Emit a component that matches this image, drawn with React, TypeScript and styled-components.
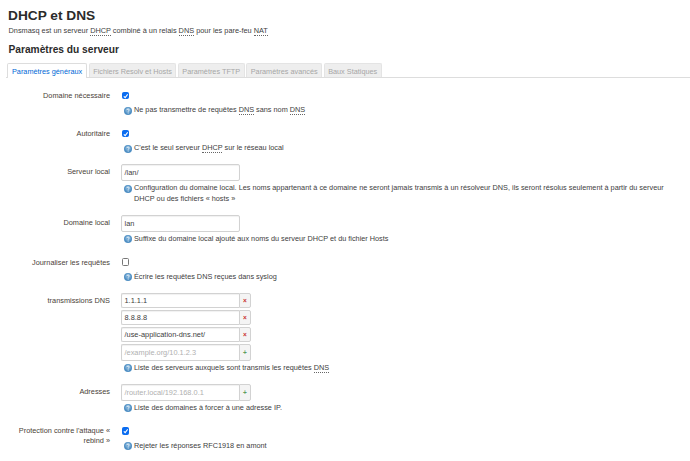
import React from 'react'
import styled, { createGlobalStyle } from 'styled-components'

const GlobalStyle = createGlobalStyle`
  html, body {
    margin: 0;
    padding: 0;
    background: #fff;
    overflow: hidden;
  }
  body {
    font-family: "Liberation Sans", Arial, sans-serif;
    color: #404040;
  }
`

const Page = styled.div`
  width: 690px;
  height: 461px;
  overflow: hidden;
  box-sizing: border-box;
  padding-top: 7px;
`

const Title = styled.h2`
  margin: 0 0 0 8px;
  font-size: 13.7px;
  line-height: 17px;
  font-weight: 700;
  color: #2b2b2b;
`

const Description = styled.p`
  margin: 1px 0 0 8.5px;
  font-size: 7.35px;
  line-height: 11px;
  color: #404040;
`

const Heading = styled.h3`
  margin: 7px 0 0 8.5px;
  font-size: 10.2px;
  line-height: 14px;
  font-weight: 700;
  color: #2b2b2b;
`

const Abbr = styled.abbr`
  text-decoration: none;
  border-bottom: 1px dotted #666;
`

const Tabs = styled.ul`
  list-style: none;
  display: flex;
  gap: 1.5px;
  margin: 6px 0 0 6px;
  padding: 0 0 0 1px;
  height: 14px;
  border-bottom: 1px solid #ddd;
`

const Tab = styled.li<{ $active?: boolean }>`
  box-sizing: border-box;
  padding: 0 ${(p) => (p.$active ? '4px' : '3.5px')};
  font-size: 7.3px;
  line-height: 15px;
  white-space: nowrap;
  border: 1px solid ${(p) => (p.$active ? '#ddd' : '#e4e4e4')};
  border-bottom: 0;
  border-radius: 2px 2px 0 0;
  background: ${(p) => (p.$active ? '#fff' : '#eee')};
  color: ${(p) => (p.$active ? '#0069d6' : '#a6a6a6')};
  height: ${(p) => (p.$active ? '15px' : '14px')};
`

const Form = styled.div`
  margin-top: 10px;
  display: flex;
  flex-direction: column;
  gap: 10.5px;
`

const Row = styled.div`
  display: grid;
  grid-template-columns: 110px 1fr;
  column-gap: 11px;
`

const Label = styled.label<{ $tall?: boolean }>`
  justify-self: end;
  text-align: right;
  width: 100px;
  font-size: 7.35px;
  line-height: ${(p) => (p.$tall ? '10.5px' : '15px')};
  padding-top: ${(p) => (p.$tall ? '2px' : '0')};
  color: #4a4238;
`

const Field = styled.div`
  min-width: 0;
`

const CheckLine = styled.div`
  height: 15px;
  display: flex;
  align-items: center;
`

const CheckBox = styled.span<{ $checked?: boolean }>`
  box-sizing: border-box;
  margin-left: 0.5px;
  width: 7.5px;
  height: 7.5px;
  border-radius: 1.5px;
  display: flex;
  align-items: center;
  justify-content: center;
  background: ${(p) => (p.$checked ? '#0a6cf0' : '#fff')};
  border: 1px solid ${(p) => (p.$checked ? '#0a6cf0' : '#777')};
  svg {
    display: block;
  }
`

const TextInput = styled.div`
  box-sizing: border-box;
  width: 119px;
  height: 17px;
  padding: 0 2.5px;
  font-size: 7.4px;
  line-height: 15px;
  white-space: nowrap;
  background: #fff;
  border: 1px solid #d2d2d2;
  border-radius: 2px;
  box-shadow: inset 0 1px 1px rgba(0, 0, 0, 0.06);
  color: #404040;
`

const DynList = styled.div`
  display: flex;
  flex-direction: column;
`

const DynRow = styled.div<{ $short?: boolean }>`
  display: flex;
  width: 130px;
  height: ${(p) => (p.$short ? '15px' : '17px')};
  margin-bottom: ${(p) => (p.$short ? '2px' : '0')};
`

const DynInput = styled.div<{ $placeholder?: boolean }>`
  box-sizing: border-box;
  flex: 1;
  padding: 0 2.5px;
  font-size: 7.4px;
  white-space: nowrap;
  background: #fff;
  border: 1px solid #d2d2d2;
  border-right: 0;
  border-radius: 2px 0 0 2px;
  box-shadow: inset 0 1px 1px rgba(0, 0, 0, 0.06);
  display: flex;
  align-items: center;
  color: ${(p) => (p.$placeholder ? '#b0b0b0' : '#404040')};
`

const DynButton = styled.div<{ $add?: boolean }>`
  box-sizing: border-box;
  width: 12px;
  display: flex;
  align-items: center;
  justify-content: center;
  font-size: 6.5px;
  font-weight: 700;
  background: #f4f4f4;
  border: 1px solid #d2d2d2;
  border-radius: 0 2px 2px 0;
  color: ${(p) => (p.$add ? '#5f9e5f' : '#c9302c')};
`

const Hint = styled.div`
  position: relative;
  margin-top: 2px;
  padding-left: 13px;
  font-size: 7.3px;
  line-height: 10.5px;
  color: #404040;
`

const HintIcon = styled.svg`
  position: absolute;
  left: 2.5px;
  top: 1.5px;
  width: 8px;
  height: 8px;
`

const HelpIcon = () => (
  <HintIcon viewBox="0 0 16 16">
    <circle cx="8" cy="8" r="8" fill="#4f8fc4" />
    <circle cx="8" cy="6.5" r="5.5" fill="#8fbde0" opacity="0.55" />
    <path d="M5.6 6.2c0-1.5 1.1-2.3 2.5-2.3s2.4.8 2.4 2c0 1.8-2.2 1.7-2.2 3.4" fill="none" stroke="#fff" strokeWidth="1.7" />
    <circle cx="8.3" cy="12" r="1.1" fill="#fff" />
  </HintIcon>
)

const Check = ({ checked }: { checked?: boolean }) => (
  <CheckLine>
    <CheckBox $checked={checked}>
      {checked && (
        <svg width="6" height="6" viewBox="0 0 10 10">
          <path d="M1.5 5.5 4 8l4.5-6" fill="none" stroke="#fff" strokeWidth="2" />
        </svg>
      )}
    </CheckBox>
  </CheckLine>
)

const Help = ({ children }: { children: React.ReactNode }) => (
  <Hint>
    <HelpIcon />
    {children}
  </Hint>
)

const tabs = [
  'Paramètres généraux',
  'Fichiers Resolv et Hosts',
  'Paramètres TFTP',
  'Paramètres avancés',
  'Baux Statiques',
]

const servers = ['1.1.1.1', '8.8.8.8', '/use-application-dns.net/']

export default function App() {
  return (
    <Page>
      <GlobalStyle />
      <Title>DHCP et DNS</Title>
      <Description>
        Dnsmasq est un serveur <Abbr>DHCP</Abbr> combiné à un relais <Abbr>DNS</Abbr> pour les pare-feu <Abbr>NAT</Abbr>
      </Description>
      <Heading>Paramètres du serveur</Heading>
      <Tabs>
        {tabs.map((t, i) => (
          <Tab key={t} $active={i === 0}>
            {t}
          </Tab>
        ))}
      </Tabs>
      <Form>
        <Row>
          <Label>Domaine nécessaire</Label>
          <Field>
            <Check checked />
            <Help>
              Ne pas transmettre de requêtes <Abbr>DNS</Abbr> sans nom <Abbr>DNS</Abbr>
            </Help>
          </Field>
        </Row>
        <Row>
          <Label>Autoritaire</Label>
          <Field>
            <Check checked />
            <Help>
              C'est le seul serveur <Abbr>DHCP</Abbr> sur le réseau local
            </Help>
          </Field>
        </Row>
        <Row>
          <Label>Serveur local</Label>
          <Field>
            <TextInput>/lan/</TextInput>
            <Help>
              Configuration du domaine local. Les noms appartenant à ce domaine ne seront jamais transmis à un résolveur DNS, ils seront résolus seulement à partir du serveur
              <br />
              DHCP ou des fichiers « hosts »
            </Help>
          </Field>
        </Row>
        <Row>
          <Label>Domaine local</Label>
          <Field>
            <TextInput>lan</TextInput>
            <Help>Suffixe du domaine local ajouté aux noms du serveur DHCP et du fichier Hosts</Help>
          </Field>
        </Row>
        <Row>
          <Label>Journaliser les requêtes</Label>
          <Field>
            <Check />
            <Help>Écrire les requêtes DNS reçues dans syslog</Help>
          </Field>
        </Row>
        <Row>
          <Label>transmissions DNS</Label>
          <Field>
            <DynList>
              {servers.map((s) => (
                <DynRow key={s} $short>
                  <DynInput>{s}</DynInput>
                  <DynButton>×</DynButton>
                </DynRow>
              ))}
              <DynRow>
                <DynInput $placeholder>/example.org/10.1.2.3</DynInput>
                <DynButton $add>+</DynButton>
              </DynRow>
            </DynList>
            <Help>
              Liste des serveurs auxquels sont transmis les requêtes <Abbr>DNS</Abbr>
            </Help>
          </Field>
        </Row>
        <Row>
          <Label>Adresses</Label>
          <Field>
            <DynRow>
              <DynInput $placeholder>/router.local/192.168.0.1</DynInput>
              <DynButton $add>+</DynButton>
            </DynRow>
            <Help>Liste des domaines à forcer à une adresse IP.</Help>
          </Field>
        </Row>
        <Row>
          <Label $tall>Protection contre l'attaque « rebind »</Label>
          <Field>
            <Check checked />
            <Help>Rejeter les réponses RFC1918 en amont</Help>
          </Field>
        </Row>
      </Form>
    </Page>
  )
}
